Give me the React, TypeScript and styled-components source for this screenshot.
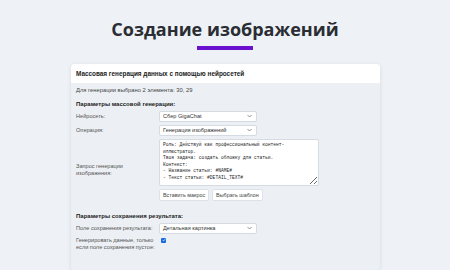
import styled, { createGlobalStyle } from 'styled-components';

const GlobalStyle = createGlobalStyle`
    body {
        margin: 0;
        background: #eef2f6;
        font-family: 'Liberation Sans', Arial, sans-serif;
        color: #2b2f36;
    }
`;

const promptText = `Роль: Действуй как профессиональный контент-иллюстратор.
Твоя задача: создать обложку для статьи.
Контекст:
- Название статьи: #NAME#
- Текст статьи: #DETAIL_TEXT#`;

const Chevron = () => (
    <svg width="5" height="4" viewBox="0 0 10 6">
        <path d="M1 1l4 4 4-4" fill="none" stroke="#777" strokeWidth="1.6" />
    </svg>
);

const Select = ({ value }: { value: string }) => (
    <SelectBox>
        <span>{value}</span>
        <Chevron />
    </SelectBox>
);

export default function App() {
    return (
        <Page>
            <GlobalStyle />
            <Title>Создание изображений</Title>
            <Underline />
            <Card>
                <CardHeader>Массовая генерация данных с помощью нейросетей</CardHeader>
                <CardBody>
                    <Info>Для генерации выбрано 2 элемента: 30, 29</Info>
                    <SectionTitle>Параметры массовой генерации:</SectionTitle>
                    <FormRow>
                        <Label>Нейросеть:</Label>
                        <Select value="Сбер GigaChat" />
                    </FormRow>
                    <FormRow>
                        <Label>Операция:</Label>
                        <Select value="Генерация изображений" />
                    </FormRow>
                    <FormRow>
                        <Label>
                            Запрос генерации
                            <br />
                            изображения:
                        </Label>
                        <Field>
                            <Prompt defaultValue={promptText} />
                            <Buttons>
                                <Button>Вставить макрос</Button>
                                <Button>Выбрать шаблон</Button>
                            </Buttons>
                        </Field>
                    </FormRow>
                    <SectionTitle $gap={8}>Параметры сохранения результата:</SectionTitle>
                    <FormRow>
                        <Label>Поле сохранения результата:</Label>
                        <Select value="Детальная картинка" />
                    </FormRow>
                    <FormRow $top>
                        <Label>
                            Генерировать данные, только
                            <br />
                            если поле сохранения пустое:
                        </Label>
                        <Check>
                            <svg width="4" height="4" viewBox="0 0 10 10">
                                <path d="M2 5.2l2 2 4-4.4" fill="none" stroke="#fff" strokeWidth="1.8" />
                            </svg>
                        </Check>
                    </FormRow>
                </CardBody>
            </Card>
        </Page>
    );
}

const Page = styled.div`
    display: flex;
    flex-direction: column;
    align-items: center;
    padding-top: 17px;
    height: 253px;
    overflow: hidden;
`;

const Title = styled.h1`
    margin: 0;
    font-family: 'Open Sans', sans-serif;
    font-weight: 700;
    font-size: 18px;
    line-height: 25px;
    color: #2a2d33;
`;

const Underline = styled.div`
    width: 56px;
    height: 4px;
    margin-top: 4px;
    background: #6a10cf;
`;

const Card = styled.div`
    width: 309px;
    margin-top: 14px;
    margin-left: 1px;
    border-radius: 4px;
    overflow: hidden;
    background: #ecf0f4;
    box-shadow: 0 1px 4px rgba(40, 60, 90, 0.12);
`;

const CardHeader = styled.div`
    background: #fff;
    height: 19px;
    padding-left: 5px;
    display: flex;
    align-items: center;
    font-size: 6.4px;
    font-weight: 700;
    color: #222;
`;

const CardBody = styled.div`
    padding: 3px 5px 20px;
    display: flex;
    flex-direction: column;
`;

const Info = styled.div`
    font-size: 5.8px;
    line-height: 8px;
    color: #444;
`;

const SectionTitle = styled.div<{ $gap?: number }>`
    margin-top: ${({ $gap }) => $gap ?? 6}px;
    margin-bottom: 3px;
    font-size: 6px;
    line-height: 8px;
    font-weight: 700;
    color: #222;
`;

const FormRow = styled.div<{ $top?: boolean }>`
    display: grid;
    grid-template-columns: 83px 1fr;
    align-items: ${({ $top }) => ($top ? 'start' : 'center')};
    margin-bottom: 3px;
`;

const Label = styled.div`
    font-size: 5.6px;
    line-height: 7px;
    color: #555;
    white-space: nowrap;
`;

const SelectBox = styled.div`
    width: 98px;
    height: 11px;
    box-sizing: border-box;
    padding: 0 4px 0 3px;
    display: flex;
    align-items: center;
    justify-content: space-between;
    background: #fff;
    border: 1px solid #d5dbe2;
    border-radius: 2px;
    font-size: 5.6px;
    color: #333;
`;

const Field = styled.div`
    display: flex;
    flex-direction: column;
    gap: 3px;
`;

const Prompt = styled.textarea`
    width: 160px;
    height: 47px;
    box-sizing: border-box;
    margin: 0;
    padding: 2px 3px;
    border: 1px solid #d5dbe2;
    border-radius: 2px;
    background: #fff;
    font-family: 'Liberation Mono', 'DejaVu Sans Mono', monospace;
    font-size: 4.6px;
    line-height: 6.6px;
    color: #222;
    resize: both;
    outline: none;
`;

const Buttons = styled.div`
    display: flex;
    gap: 3px;
`;

const Button = styled.button`
    height: 12px;
    padding: 0 3px;
    background: #fff;
    border: 1px solid #dde2e8;
    border-radius: 2px;
    font-family: inherit;
    font-size: 5.4px;
    color: #444;
`;

const Check = styled.div`
    width: 5px;
    height: 5px;
    margin: 1px 0 0 2px;
    border-radius: 1px;
    background: #1a6be0;
    display: flex;
    align-items: center;
    justify-content: center;
`;
